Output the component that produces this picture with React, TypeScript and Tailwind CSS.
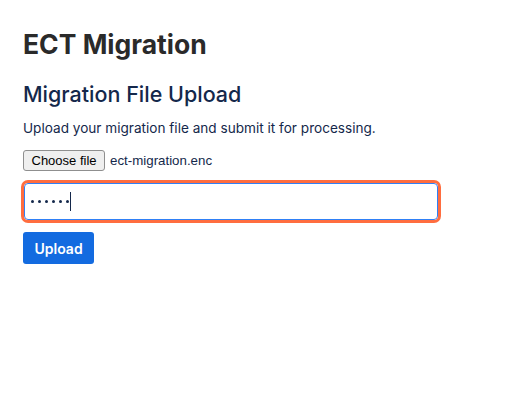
export default function App() {
  return (
    <main className="min-h-screen bg-white px-[23px] pt-[27px] font-['Inter',sans-serif]">
      <h1 className="text-[26.5px] font-bold leading-[34px] text-[#2a2a2a]">ECT Migration</h1>

      <h2 className="mt-[18px] text-[21.5px] font-medium leading-[30px] text-[#14284b]">Migration File Upload</h2>
      <p className="mt-[10px] text-[13.6px] leading-[18px] text-[#14284b]">
        Upload your migration file and submit it for processing.
      </p>

      {/* file picker */}
      <div className="mt-[13px] flex items-center gap-[5px]">
        <button className="h-[21px] rounded-[3px] border border-[#8f8f8f] bg-[#efefef] px-[7.5px] font-['Liberation_Sans',sans-serif] text-[13px] leading-none text-black">
          Choose file
        </button>
        <span className="font-['Liberation_Sans',sans-serif] text-[13.3px] text-[#14284b]">ect-migration.enc</span>
      </div>

      {/* password, focused */}
      <div className="ml-px mt-[12px] flex h-[37px] w-[414px] items-center rounded-[4px] border border-[#2f80f6] px-[6px] outline-[3px] outline-[#ff6d3f] outline-solid">
        <div className="flex items-center gap-[4px]">
          <span className="h-[3px] w-[3px] rounded-full bg-[#14284b]" />
          <span className="h-[3px] w-[3px] rounded-full bg-[#14284b]" />
          <span className="h-[3px] w-[3px] rounded-full bg-[#14284b]" />
          <span className="h-[3px] w-[3px] rounded-full bg-[#14284b]" />
          <span className="h-[3px] w-[3px] rounded-full bg-[#14284b]" />
          <span className="h-[3px] w-[3px] rounded-full bg-[#14284b]" />
        </div>
        <span className="ml-[1px] h-[19px] w-px bg-[#14284b]" />
      </div>

      <button className="mt-[12px] h-[32px] rounded-[3px] bg-[#136be0] px-[11.5px] text-[14px] font-semibold text-white">
        Upload
      </button>
    </main>
  );
}
